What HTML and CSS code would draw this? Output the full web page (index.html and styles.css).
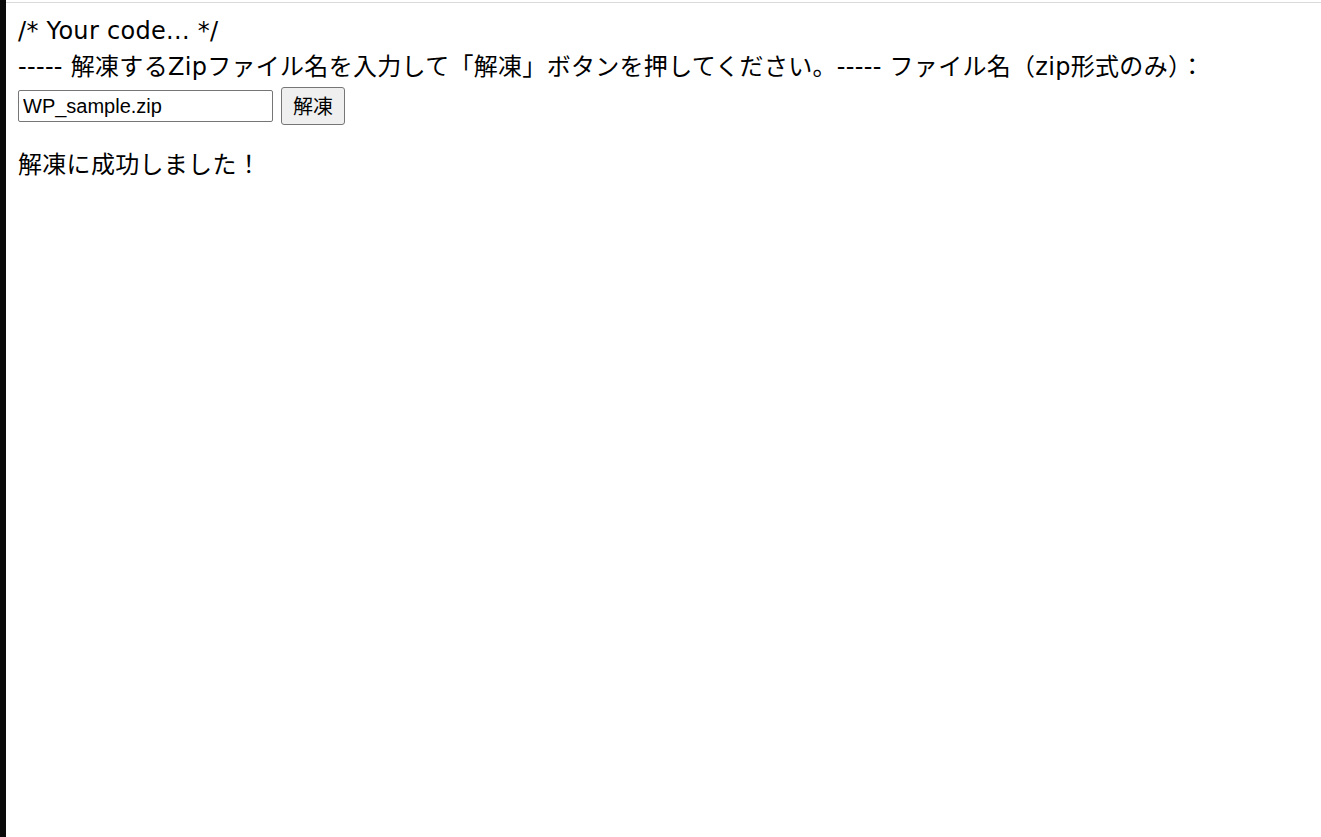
FILE: index.html
```html
<!DOCTYPE html>
<html lang="ja">
<head>
<meta charset="utf-8">
<title>解凍</title>
<link rel="stylesheet" href="styles.css">
</head>
<body>
<div class="desktop-strip"></div>
<main class="page">
  <div class="line">/* Your code... */</div>
  <div class="line">----- 解凍するZipファイル名を入力して「解凍」ボタンを押してください。----- ファイル名（zip形式のみ）：</div>
  <form class="row">
    <input class="field" type="text" value="WP_sample.zip">
    <button class="btn" type="button">解凍</button>
  </form>
  <div class="line result">解凍に成功しました！</div>
</main>
</body>
</html>
```
FILE: styles.css
```css
html, body {
  margin: 0;
  padding: 0;
  height: 100%;
  background: #fff;
}
body {
  display: flex;
  font-family: "DejaVu Sans", "Noto Sans CJK JP", sans-serif;
  color: #000;
}
.desktop-strip {
  width: 6px;
  flex: none;
  background: #0a0a0a;
}
.page {
  flex: 1;
  border-top: 1px solid #dadada;
  margin-top: 2px;
  padding: 10px 12px 0;
  font-size: 24px;
  line-height: 36px;
}
.line {
  white-space: nowrap;
  letter-spacing: 0.3px;
}
.row {
  display: flex;
  align-items: center;
  gap: 8px;
  margin: 2px 0 0;
  height: 38px;
}
.field {
  width: 255px;
  height: 32px;
  box-sizing: border-box;
  border: 1px solid #767676;
  border-radius: 2px;
  padding: 0 4px;
  font-family: "Liberation Sans", sans-serif;
  font-size: 20px;
  color: #000;
  background: #fff;
}
.btn {
  width: 64px;
  height: 38px;
  box-sizing: border-box;
  border: 1px solid #767676;
  border-radius: 3px;
  background: #efefef;
  font-family: "Noto Sans CJK JP", sans-serif;
  font-size: 20px;
  line-height: 1;
  color: #000;
  padding: 0;
}
.result {
  margin-top: 22px;
}
```
